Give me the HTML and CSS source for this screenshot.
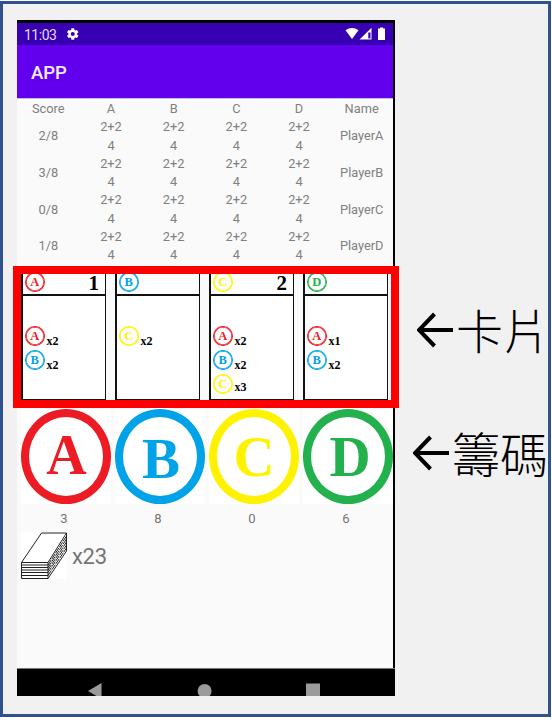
FILE: index.html
```
<!DOCTYPE html>
<html lang="zh-Hant">
<head>
<meta charset="utf-8">
<title>APP</title>
<link rel="stylesheet" href="styles.css">
</head>
<body>
<div class="frame">
  <main class="phone">
    <header class="status">
      <span class="clock">11:03</span>
      <svg class="gear" viewBox="2 2 20 20"><path fill-rule="evenodd" d="M19.43 12.98c.04-.32.07-.64.07-.98s-.03-.66-.07-.98l2.11-1.65c.19-.15.24-.42.12-.64l-2-3.46c-.12-.22-.39-.3-.61-.22l-2.49 1c-.52-.4-1.08-.73-1.69-.98l-.38-2.65C14.46 2.18 14.25 2 14 2h-4c-.25 0-.46.18-.49.42l-.38 2.65c-.61.25-1.17.59-1.69.98l-2.49-1c-.23-.09-.49 0-.61.22l-2 3.46c-.13.22-.07.49.12.64l2.11 1.65c-.04.32-.07.65-.07.98s.03.66.07.98l-2.11 1.65c-.19.15-.24.42-.12.64l2 3.46c.12.22.39.3.61.22l2.49-1c.52.4 1.08.73 1.69.98l.38 2.65c.03.24.24.42.49.42h4c.25 0 .46-.18.49-.42l.38-2.65c.61-.25 1.17-.59 1.69-.98l2.49 1c.23.09.49 0 .61-.22l2-3.46c.12-.22.07-.49-.12-.64zM12 15.500a3.500 3.500 0 1 1 0-7 3.500 3.500 0 0 1 0 7z"/></svg>
      <svg class="signals" width="41" height="14" viewBox="0 0 41 14"><path d="M0.5 3.2Q7 -1.4 13.500 3.200L7 12z"/><path fill-rule="evenodd" d="M14.500 12.500L26.500 .8V12.500zM23.300 5.500V11.500H25.500V5.500z"/><path d="M33 1.500h2V.4h3.200v1.100h1.800v11.500h-7z"/></svg>
    </header>
    <h1 class="appbar">APP</h1>
    <section class="scores">
      <div class="row head"><span>Score</span><span>A</span><span>B</span><span>C</span><span>D</span><span>Name</span></div>
      <div class="row"><span>2/8</span><span>2+2<br>4</span><span>2+2<br>4</span><span>2+2<br>4</span><span>2+2<br>4</span><span>PlayerA</span></div>
      <div class="row"><span>3/8</span><span>2+2<br>4</span><span>2+2<br>4</span><span>2+2<br>4</span><span>2+2<br>4</span><span>PlayerB</span></div>
      <div class="row"><span>0/8</span><span>2+2<br>4</span><span>2+2<br>4</span><span>2+2<br>4</span><span>2+2<br>4</span><span>PlayerC</span></div>
      <div class="row"><span>1/8</span><span>2+2<br>4</span><span>2+2<br>4</span><span>2+2<br>4</span><span>2+2<br>4</span><span>PlayerD</span></div>
    </section>
    <section class="cards">
      <article class="card">
        <div class="card-top"><i class="chip red">A</i><b>1</b></div>
        <div class="cost"><i class="chip red">A</i><span>x2</span></div>
        <div class="cost"><i class="chip blue">B</i><span>x2</span></div>
      </article>
      <article class="card">
        <div class="card-top"><i class="chip blue">B</i></div>
        <div class="cost"><i class="chip yellow">C</i><span>x2</span></div>
      </article>
      <article class="card">
        <div class="card-top"><i class="chip yellow">C</i><b>2</b></div>
        <div class="cost"><i class="chip red">A</i><span>x2</span></div>
        <div class="cost"><i class="chip blue">B</i><span>x2</span></div>
        <div class="cost last"><i class="chip yellow">C</i><span>x3</span></div>
      </article>
      <article class="card">
        <div class="card-top"><i class="chip green">D</i></div>
        <div class="cost"><i class="chip red">A</i><span>x1</span></div>
        <div class="cost"><i class="chip blue">B</i><span>x2</span></div>
      </article>
    </section>
    <section class="tokens">
      <div class="token"><div class="tile"><i class="big big-a red">A</i></div><span>3</span></div>
      <div class="token"><div class="tile"><i class="big big-b blue">B</i></div><span>8</span></div>
      <div class="token"><div class="tile"><i class="big big-c yellow">C</i></div><span>0</span></div>
      <div class="token"><div class="tile"><i class="big big-d green">D</i></div><span>6</span></div>
    </section>
    <section class="deck">
      <svg class="pile" viewBox="0 0 46 47"><path d="M.5 30.500L20.500 1H45.500L27 30.500z"/><path d="M.5 30.500H27V46.500H.5z"/><path d="M.5 33H27M.5 35.500H27M.5 38H27M.5 40.500H27M.5 43.500H27"/><path d="M45.500 1V19L27 46.500"/><path stroke-dasharray="6 1" d="M27 33L45.500 4M27 35.500L45.500 7M27 38L45.500 10M27 40.500L45.500 13M27 43.500L45.500 16"/></svg>
      <span>x23</span>
    </section>
    <nav class="nav"><svg width="376" height="27" viewBox="0 0 376 27"><path d="M71 22L84.500 14V30z"/><circle cx="187.600" cy="22" r="7"/><path d="M289 14.500h14v14h-14z"/></svg></nav>
  </main>
  <aside class="notes">
    <p class="note"><svg class="arrow" viewBox="0 0 37 36"><path d="M36 18H2M17.500 2L2 18L17.500 34"/></svg><span>卡片</span></p>
    <p class="note"><svg class="arrow" viewBox="0 0 37 36"><path d="M36 18H2M17.500 2L2 18L17.500 34"/></svg><span>籌碼</span></p>
  </aside>
</div>
</body>
</html>
```
FILE: styles.css
```
* { box-sizing: border-box; }
body { margin: 0; padding-top: 1px; background: #fff; font-family: Roboto, sans-serif; height: 720px; overflow: hidden; }
.frame { display: flex; width: 551px; height: 716px; padding: 16px 0 0 14px; border: 3px solid #2f528f; background: #f1f1f1; }
.phone { display: flex; flex-direction: column; flex: none; width: 378px; height: 676px; border-top: 3px solid #000; border-right: 2px solid #000; background: #fafafa; }

.status { display: flex; align-items: center; flex: none; height: 22px; padding: 0 7px; background: #3700b3; color: #e2dcf3; font-size: 14px; }
.clock { width: 33px; padding-top: 1px; letter-spacing: -.5px; }
.gear { width: 11.500px; height: 12px; margin-left: 10px; fill: #fff; }
.signals { margin-left: auto; fill: #fff; }
.appbar { flex: none; height: 53px; margin: 0; padding-left: 14px; background: #6200ee; color: #f4edff; font-size: 18.500px; font-weight: 500; line-height: 56px; }

.scores { flex: none; height: 168px; padding-top: 1px; border-top: 1px solid #c4bfd8; color: #808080; font-size: 12.800px; line-height: 18.300px; }
.row { display: grid; grid-template-columns: repeat(6, 1fr); align-items: center; text-align: center; }

.cards { display: flex; flex: none; gap: 9px; height: 142px; margin: 0 -6px 0 -4px; border: 8px solid #f00; background: #fafafa; }
.card { width: 85px; border: solid #111; border-width: 0 1px 1px 2px; background: #fff; font: bold 12px/14px "Liberation Serif", serif; color: #000; height: 126px; overflow: hidden; }
.card-top { display: flex; align-items: flex-end; justify-content: space-between; height: 22px; margin-bottom: 30px; padding: 0 6px 2px 2px; border-bottom: 2px solid #111; }
.card-top b { height: 20px; font-size: 21px; line-height: 23px; }
.cost { display: flex; align-items: flex-start; gap: 2px; height: 20.300px; margin-bottom: 3.700px; padding-left: 2px; }
.cost span { padding-top: 8px; }
.cost.last span { padding-top: 6px; }

.chip, .big { display: block; flex: none; border: solid currentColor; border-radius: 50%; background: #fff; font-family: "Liberation Serif", serif; font-style: normal; font-weight: bold; text-align: center; }
.chip { width: 19.500px; height: 20.300px; border-width: 1px; box-shadow: inset 0 0 0 .7px currentColor; font-size: 12.500px; line-height: 18px; }
.big { width: 90px; height: 95px; border-width: 8px; font-size: 57px; line-height: 79px; }
.big-a { padding-left: 1px; font-size: 56px; line-height: 77px; }
.big-b { padding-left: 2px; line-height: 84px; }
.big-c { line-height: 80px; }
.big-d { padding-left: 4px; line-height: 80px; }
.red { color: #ed1c24; }
.blue { color: #00a2e8; }
.yellow { color: #fff200; }
.green { color: #22b14c; }

.tokens { display: flex; flex: none; gap: 4px; padding: 1px 0 0 4px; }
.token { flex: none; width: 90px; text-align: center; color: #757575; font-size: 13px; line-height: 18px; }
.token span { display: block; width: 86px; margin-top: 6px; }
.tile { width: 90px; height: 95px; background: #fff; }

.deck { display: flex; align-items: center; gap: 5px; flex: none; margin: 4px 0 0 4px; color: #757575; font-size: 22px; letter-spacing: -.3px; }
.pile { width: 46px; height: 47px; background: #fff; fill: #fff; stroke: #222; stroke-width: 1; }
.deck span { padding-top: 1px; }

.nav { flex: none; height: 28px; width: 378px; margin-top: auto; border-top: 1px solid #777; background: #000; overflow: hidden; }
.nav svg { display: block; fill: #9b9b9b; }

.notes { display: flex; flex-direction: column; flex: none; padding-top: 277px; }
.note { display: flex; align-items: center; height: 66px; margin: 0 0 57px 22px; font: 300 47px/64px "Noto Sans CJK TC", sans-serif; color: #000; white-space: nowrap; }
.note + .note { margin-left: 18px; font-size: 48px; }
.note span { margin-top: -3px; }
.arrow { flex: none; width: 37px; height: 36px; margin-right: 2px; fill: none; stroke: #000; stroke-width: 4; }
```
